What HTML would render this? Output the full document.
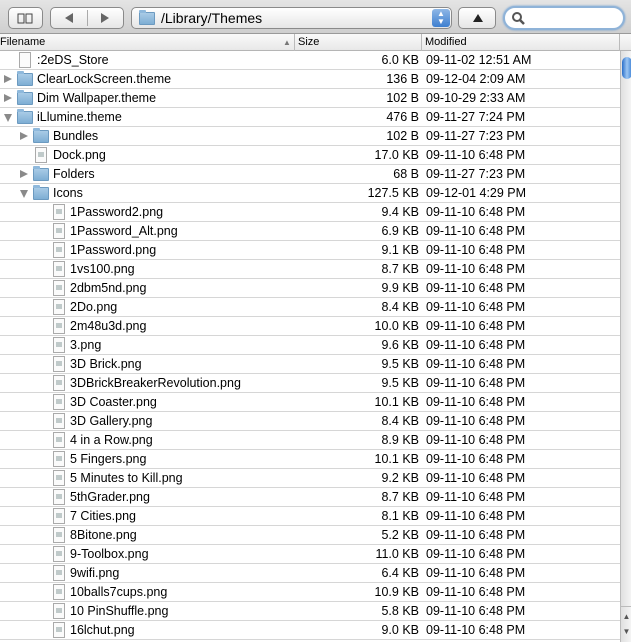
<!DOCTYPE html>
<html><head><style>
*{margin:0;padding:0;box-sizing:border-box}
body{width:631px;height:642px;overflow:hidden;background:#fff;font-family:"Liberation Sans",sans-serif;font-size:12px;color:#000;position:relative}
.tb{position:absolute;left:0;top:0;width:631px;height:34px;background:linear-gradient(#e4e4e4,#cfcfcf);border-bottom:1px solid #9a9a9a}
.btn{position:absolute;top:7px;height:22px;border:1px solid #8a8a8a;border-radius:5px;background:linear-gradient(#fff,#e6e6e6)}
.hdr{position:absolute;left:0;top:34px;width:631px;height:17px;background:linear-gradient(#fafafa,#e8e8e8);border-bottom:1px solid #b5b5b5;font-size:11px}
.hdr span{position:absolute;top:2px}
.row{position:absolute;left:0;width:620px;height:19px;border-bottom:1px solid #d6d6d6;font-size:12.5px;line-height:18px}
.row .n{position:absolute;top:0;white-space:nowrap}
.row .s{position:absolute;right:201px;top:0}
.row .d{position:absolute;left:426px;top:0}
.tri{position:absolute;top:5px;width:0;height:0}
.tr{border-left:8px solid #8a8a8a;border-top:4.5px solid transparent;border-bottom:4.5px solid transparent;top:5px}
.td{border-top:8px solid #8a8a8a;border-left:4.5px solid transparent;border-right:4.5px solid transparent;top:6px}
.fo{position:absolute;top:3px;width:16px;height:13px;background:linear-gradient(#a9cbe6,#7eaed4);border:1px solid #6c9ac0;border-radius:1px}
.fo:before{content:"";position:absolute;left:-1px;top:-3px;width:7px;height:3px;background:#8fb9dc;border-radius:1px 1px 0 0}
.fi{position:absolute;top:1px;width:12px;height:16px;background:#fbfbfb;border:1px solid #aaa}
.fi.p:after{content:"";position:absolute;left:2px;top:4px;width:6px;height:5px;background:#9aa;opacity:.6}
.sb{position:absolute;left:620px;top:51px;width:11px;height:591px;background:linear-gradient(90deg,#e0e0e0,#f4f4f4);border-left:1px solid #bbb}
</style></head><body>
<div class="tb">
 <div class="btn" style="left:8px;width:35px"><svg width="33" height="20" viewBox="0 0 33 20"><path d="M9 6h6v9H9zM17 6h6v9h-6z" fill="none" stroke="#444" stroke-width="1"/></svg></div>
 <div class="btn" style="left:50px;width:74px"><div style="position:absolute;left:36px;top:2px;width:1px;height:16px;background:#aaa"></div><div class="tri" style="left:14px;top:5px;border-right:8px solid #666;border-top:5px solid transparent;border-bottom:5px solid transparent"></div><div class="tri" style="left:50px;top:5px;border-left:8px solid #666;border-top:5px solid transparent;border-bottom:5px solid transparent"></div></div>
 <div class="btn" style="left:131px;width:321px"><div class="fo" style="left:7px;top:4px"></div><span style="position:absolute;left:29px;top:2px;font-size:14px">/Library/Themes</span><div style="position:absolute;right:1px;top:1px;width:18px;height:18px;border-radius:3px;background:linear-gradient(#8fb7e6,#3e7fd0);color:#fff;font-size:8px;line-height:8px;text-align:center;padding-top:1px">▲<br>▼</div></div>
 <div class="btn" style="left:458px;width:38px"><div class="tri" style="left:14px;top:6px;border-bottom:8px solid #222;border-left:5px solid transparent;border-right:5px solid transparent"></div></div>
 <div style="position:absolute;left:503px;top:6px;width:122px;height:24px;border-radius:12px;background:#fff;border:2px solid #8fb3d8;box-shadow:0 0 2px #6a9bd0"><svg width="16" height="16" style="position:absolute;left:6px;top:3px"><circle cx="6" cy="6" r="4" fill="none" stroke="#555" stroke-width="2"/><path d="M9 9l4 4" stroke="#555" stroke-width="2.5"/></svg></div>
</div>
<div class="hdr"><span style="left:0">Filename</span><span style="left:283px;font-size:8px;top:4px;color:#777">▲</span><div style="position:absolute;left:294px;top:0;width:1px;height:17px;background:#bbb"></div><span style="left:298px">Size</span><div style="position:absolute;left:421px;top:0;width:1px;height:17px;background:#bbb"></div><span style="left:425px">Modified</span><div style="position:absolute;left:619px;top:0;width:1px;height:17px;background:#bbb"></div></div>
<div id="rows"></div>
<div class="sb"><div style="position:absolute;left:1px;top:6px;width:10px;height:22px;border-radius:5px;background:linear-gradient(90deg,#2a6fc9,#9cc6f3,#3d82d6)"></div>
<div style="position:absolute;left:0;top:555px;width:11px;height:36px;border-top:1px solid #bbb;font-size:8px;color:#555;text-align:center;line-height:15px;padding-top:2px">▲<br>▼</div></div>
<script>
var R=[
[0,'f',':2eDS_Store','6.0 KB','09-11-02 12:51 AM'],
[0,'dr','ClearLockScreen.theme','136 B','09-12-04 2:09 AM'],
[0,'dr','Dim Wallpaper.theme','102 B','09-10-29 2:33 AM'],
[0,'dd','iLlumine.theme','476 B','09-11-27 7:24 PM'],
[1,'dr','Bundles','102 B','09-11-27 7:23 PM'],
[1,'p','Dock.png','17.0 KB','09-11-10 6:48 PM'],
[1,'dr','Folders','68 B','09-11-27 7:23 PM'],
[1,'dd','Icons','127.5 KB','09-12-01 4:29 PM'],
[2,'p','1Password2.png','9.4 KB'],[2,'p','1Password_Alt.png','6.9 KB'],[2,'p','1Password.png','9.1 KB'],[2,'p','1vs100.png','8.7 KB'],[2,'p','2dbm5nd.png','9.9 KB'],[2,'p','2Do.png','8.4 KB'],[2,'p','2m48u3d.png','10.0 KB'],[2,'p','3.png','9.6 KB'],[2,'p','3D Brick.png','9.5 KB'],[2,'p','3DBrickBreakerRevolution.png','9.5 KB'],[2,'p','3D Coaster.png','10.1 KB'],[2,'p','3D Gallery.png','8.4 KB'],[2,'p','4 in a Row.png','8.9 KB'],[2,'p','5 Fingers.png','10.1 KB'],[2,'p','5 Minutes to Kill.png','9.2 KB'],[2,'p','5thGrader.png','8.7 KB'],[2,'p','7 Cities.png','8.1 KB'],[2,'p','8Bitone.png','5.2 KB'],[2,'p','9-Toolbox.png','11.0 KB'],[2,'p','9wifi.png','6.4 KB'],[2,'p','10balls7cups.png','10.9 KB'],[2,'p','10 PinShuffle.png','5.8 KB'],[2,'p','16lchut.png','9.0 KB']];
var h='';R.forEach(function(r,i){var l=r[0],t=r[1],y=51+i*19,ix=[17,33,51][l],tx=[37,53,70][l];
h+='<div class="row" style="top:'+y+'px">';
if(t=='dr'||t=='dd')h+='<div class="tri '+(t=='dr'?'tr':'td')+'" style="left:'+([4,20][l])+'px"></div><div class="fo" style="left:'+ix+'px"></div>';
else h+='<div class="fi'+(t=='p'?' p':'')+'" style="left:'+(ix+2)+'px"></div>';
h+='<span class="n" style="left:'+tx+'px">'+r[2]+'</span><span class="s">'+r[3]+'</span><span class="d">'+(r[4]||'09-11-10 6:48 PM')+'</span></div>';});
document.getElementById('rows').innerHTML=h;
</script>
</body></html>
